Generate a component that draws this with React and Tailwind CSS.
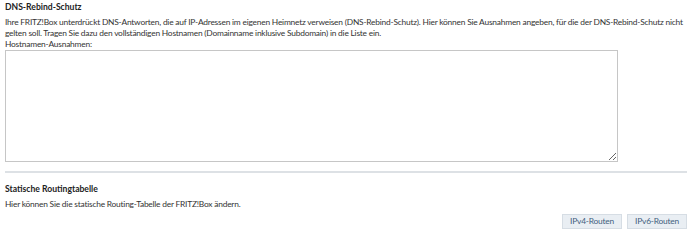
// FRITZ!Box – Heimnetz > Netzwerk > Netzwerkeinstellungen (Ausschnitt)
const Section = ({ title, children, className = '' }) => (
  <section className={className}>
    <h3 className="text-[8.6px] font-bold leading-[12px] tracking-normal text-[#222]">{title}</h3>
    {children}
  </section>
);

const RouteButton = ({ children }) => (
  <button
    type="button"
    className="h-[15px] w-[60px] border border-[#d6dde4] bg-[#e9eef3] leading-[13px] text-[#3f5e7e]"
  >
    {children}
  </button>
);

export default function App() {
  return (
    <div className="w-[690px] pl-[5px] pr-[3px] pt-[1px] font-['Lato',sans-serif] text-[8.4px] tracking-tight text-[#333]">
      <Section title="DNS-Rebind-Schutz">
        <p className="mt-[4px] leading-[11px]">
          Ihre FRITZ!Box unterdrückt DNS-Antworten, die auf IP-Adressen im eigenen Heimnetz verweisen
          (DNS-Rebind-Schutz). Hier können Sie Ausnahmen angeben, für die der DNS-Rebind-Schutz nicht
          gelten soll. Tragen Sie dazu den vollständigen Hostnamen (Domainname inklusive Subdomain) in
          die Liste ein.
        </p>
        <label htmlFor="rebind" className="block leading-[11px]">
          Hostnamen-Ausnahmen:
        </label>
        <textarea
          id="rebind"
          className="block h-[112px] w-[613px] border border-[#c6c6c6] bg-white"
        />
      </Section>

      <div className="mt-[9px] h-[2px] bg-[#dde1e5]" />

      <Section title="Statische Routingtabelle" className="mt-[10px]">
        <p className="mt-[4px] leading-[11px]">
          Hier können Sie die statische Routing-Tabelle der FRITZ!Box ändern.
        </p>
        <div className="mt-[4px] flex justify-end gap-[5px]">
          <RouteButton>IPv4-Routen</RouteButton>
          <RouteButton>IPv6-Routen</RouteButton>
        </div>
      </Section>
    </div>
  );
}
